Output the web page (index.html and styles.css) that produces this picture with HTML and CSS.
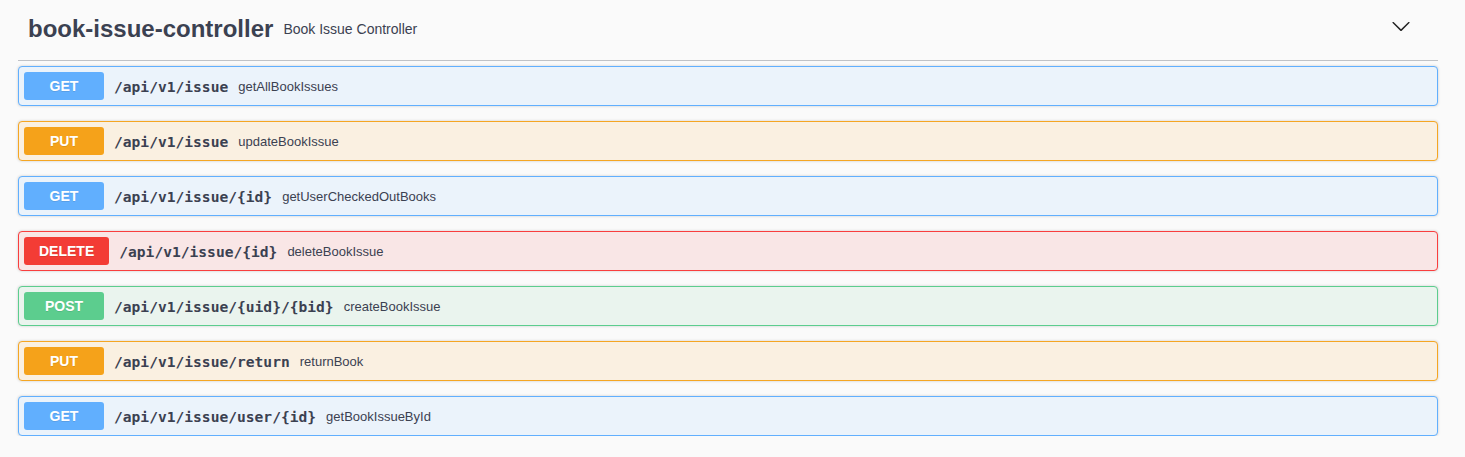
FILE: index.html
```html
<!DOCTYPE html>
<html lang="en">
<head>
<meta charset="utf-8">
<title>book-issue-controller</title>
<link rel="stylesheet" href="styles.css">
</head>
<body>
<section class="tag-section">
  <h3 class="tag-header">
    <span class="tag-name">book-issue-controller</span>
    <small class="tag-desc">Book Issue Controller</small>
    <button class="expand" aria-label="Collapse operation">
      <svg width="20" height="20" viewBox="0 0 20 20"><path d="M17.418 6.109c.272-.268.709-.268.979 0s.271.701 0 .969l-7.908 7.83c-.27.268-.707.268-.979 0l-7.908-7.83c-.27-.268-.27-.701 0-.969.271-.268.709-.268.979 0L10 13.25l7.418-7.141z" fill="#222"/></svg>
    </button>
  </h3>
  <div class="ops">
    <div class="op op-get"><span class="method">GET</span><span class="path">/api/v1/issue</span><span class="summary">getAllBookIssues</span></div>
    <div class="op op-put"><span class="method">PUT</span><span class="path">/api/v1/issue</span><span class="summary">updateBookIssue</span></div>
    <div class="op op-get"><span class="method">GET</span><span class="path">/api/v1/issue/{id}</span><span class="summary">getUserCheckedOutBooks</span></div>
    <div class="op op-delete"><span class="method">DELETE</span><span class="path">/api/v1/issue/{id}</span><span class="summary">deleteBookIssue</span></div>
    <div class="op op-post"><span class="method">POST</span><span class="path">/api/v1/issue/{uid}/{bid}</span><span class="summary">createBookIssue</span></div>
    <div class="op op-put"><span class="method">PUT</span><span class="path">/api/v1/issue/return</span><span class="summary">returnBook</span></div>
    <div class="op op-get"><span class="method">GET</span><span class="path">/api/v1/issue/user/{id}</span><span class="summary">getBookIssueById</span></div>
  </div>
</section>
</body>
</html>
```

FILE: styles.css
```css
html, body {
  margin: 0;
  background: #fafafa;
}
body {
  padding: 0 27px 0 18px;
  font-family: "Liberation Sans", Arial, sans-serif;
  color: #3b4151;
}
.tag-section {
  display: flex;
  flex-direction: column;
}
.tag-header {
  display: flex;
  align-items: center;
  margin: 0 0 5px;
  padding: 15px 27px 17px 10px;
  border-bottom: 1px solid rgba(59, 65, 81, 0.3);
}
.tag-name {
  font-size: 24px;
  font-weight: 700;
  line-height: 28px;
  color: #3b4151;
}
.tag-desc {
  flex: 1;
  padding: 0 10px;
  font-size: 14px;
  font-weight: 400;
  color: #3b4151;
}
.expand {
  display: flex;
  border: 0;
  padding: 0;
  margin: 0 0 6px;
  background: none;
}
.ops {
  display: flex;
  flex-direction: column;
  gap: 15px;
}
.op {
  display: flex;
  align-items: center;
  padding: 5px;
  border: 1px solid;
  border-radius: 4px;
  box-shadow: 0 0 3px rgba(0, 0, 0, 0.19);
}
.method {
  min-width: 80px;
  box-sizing: border-box;
  padding: 6px 15px;
  border-radius: 3px;
  font-size: 14px;
  line-height: 16px;
  font-weight: 700;
  color: #fff;
  text-align: center;
  text-shadow: 0 1px 0 rgba(0, 0, 0, 0.1);
}
.path {
  padding: 0 10px;
  font-family: "DejaVu Sans Mono", "Liberation Mono", monospace;
  font-size: 14.6px;
  font-weight: 700;
  color: #3b4151;
}
.summary {
  font-size: 13px;
  color: #3b4151;
}
.op-get { background: #ebf3fb; border-color: #61affe; }
.op-get .method { background: #61affe; }
.op-put { background: #faf0e1; border-color: #f5a623; }
.op-put .method { background: #f5a21a; }
.op-delete { background: #f9e6e6; border-color: #f93e3e; }
.op-delete .method { background: #f33c35; }
.op-post { background: #eaf4ee; border-color: #5ccd8e; }
.op-post .method { background: #5ccd8e; }
```
